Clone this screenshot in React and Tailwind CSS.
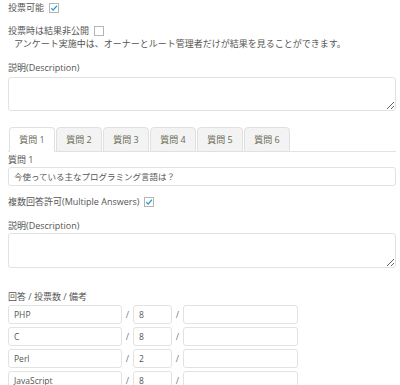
import { useState } from 'react';

const tabs = ['質問 1', '質問 2', '質問 3', '質問 4', '質問 5', '質問 6'];
const answers = [
  { text: 'PHP', count: '8' },
  { text: 'C', count: '8' },
  { text: 'Perl', count: '2' },
  { text: 'JavaScript', count: '8' },
];

function Check({ checked }) {
  return (
    <span className="inline-flex items-center justify-center w-[10px] h-[10px] border border-[#b5b5b5] bg-white ml-[5px] shrink-0">
      {checked && (
        <svg viewBox="0 0 10 10" className="w-[8px] h-[8px]">
          <path d="M1.5 5.2 L4 7.6 L8.6 2.2" fill="none" stroke="#2a9ad8" strokeWidth="1.6" />
        </svg>
      )}
    </span>
  );
}

export default function App() {
  const [active, setActive] = useState(0);

  return (
    <div className="w-[400px] h-[385px] overflow-hidden bg-white text-[9px] leading-[12px] text-[#555]"
      style={{ fontFamily: '"Open Sans", "Noto Sans CJK JP", sans-serif' }}>
      <div className="pl-[8px] pr-[4px] pt-[2px]">
        <div className="flex items-center">投票可能<Check checked /></div>

        <div className="flex items-center mt-[11px]">投票時は結果非公開<Check /></div>
        <div className="mt-[1px] pl-[6px]">アンケート実施中は、オーナーとルート管理者だけが結果を見ることができます。</div>

        <div className="mt-[12px]">説明(Description)</div>
        <textarea className="block mt-[3px] w-[388px] h-[34px] border border-[#e2e2e2] rounded-[3px] resize-y" />

        {/* Tabs */}
        <div className="flex gap-[1px] pl-[1px] mt-[16px] border-b border-[#e3e3e3] w-[388px]">
          {tabs.map((t, i) => (
            <button key={t} onClick={() => setActive(i)}
              className={`w-[46px] h-[25px] rounded-t-[4px] border border-[#e0e0e0] text-[9px] text-[#6b6b55] -mb-px ${
                i === active ? 'bg-white border-b-white' : 'bg-[#f3f3f3]'
              }`}>
              {t}
            </button>
          ))}
        </div>

        <div className="mt-[2px]">{tabs[active]}</div>
        <div className="mt-[1px] w-[388px] h-[19px] border border-[#e2e2e2] rounded-[3px] px-[5px] flex items-center text-[8.5px] text-[#555]">
          今使っている主なプログラミング言語は？
        </div>

        <div className="flex items-center mt-[10px]">複数回答許可(Multiple Answers)<Check checked /></div>

        <div className="mt-[12px]">説明(Description)</div>
        <textarea className="block mt-[1px] w-[388px] h-[35px] border border-[#e2e2e2] rounded-[3px] resize-y" />

        <div className="mt-[23px]">回答 / 投票数 / 備考</div>
        <div className="mt-[2px] flex flex-col gap-[3px]">
          {answers.map(a => (
            <div key={a.text} className="flex items-center">
              <div className="w-[114px] h-[19px] border border-[#e2e2e2] rounded-[3px] px-[5px] flex items-center text-[8.5px]">{a.text}</div>
              <span className="w-[11px] text-center text-[#777]">/</span>
              <div className="w-[39px] h-[19px] border border-[#e2e2e2] rounded-[3px] px-[5px] flex items-center text-[8.5px]">{a.count}</div>
              <span className="w-[11px] text-center text-[#777]">/</span>
              <div className="w-[115px] h-[19px] border border-[#e2e2e2] rounded-[3px]" />
            </div>
          ))}
        </div>
      </div>
    </div>
  );
}
